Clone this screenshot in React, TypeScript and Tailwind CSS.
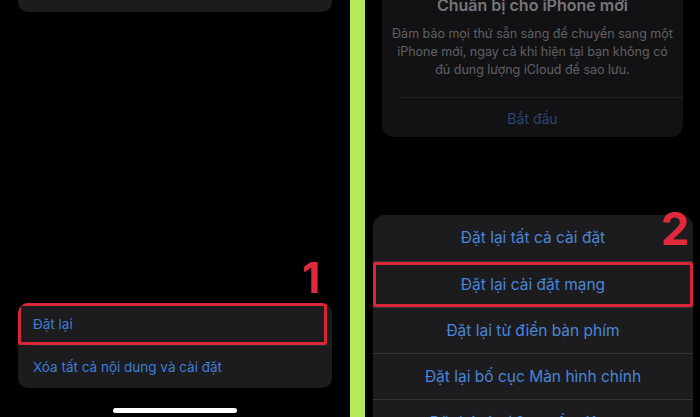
import React from 'react';

const FONT = { fontFamily: 'Inter, "Liberation Sans", "Noto Sans", sans-serif' };

// Hàng trong menu đặt lại (bên phải)
const sheetRows = [
  'Đặt lại tất cả cài đặt',
  'Đặt lại cài đặt mạng',
  'Đặt lại từ điển bàn phím',
  'Đặt lại bố cục Màn hình chính',
  'Đặt lại vị trí & quyền riêng tư',
];

function LeftPhone() {
  return (
    <div className="relative flex h-full w-[350px] shrink-0 flex-col bg-black">
      <div className="mx-[18px] h-[12px] rounded-b-[10px] bg-[#1c1c1e]" />

      <div className="absolute left-[302px] top-[257px] text-[42px] font-bold leading-none text-[#e02a3c]">
        1
      </div>

      <div className="mx-[18px] mt-[291px] flex flex-col overflow-hidden rounded-[10px] bg-[#1c1c1e]">
        <div className="relative flex h-[42px] items-center pl-[15px]">
          <span className="text-[13.5px] text-[#3f7fd6]">Đặt lại</span>
          <div className="absolute inset-y-0 left-0 right-[5px] rounded-[2px] border-[3px] border-[#d9253a]" />
        </div>
        <div className="ml-[15px] h-px bg-[#2a2a2c]" />
        <div className="flex h-[42px] items-center pl-[15px]">
          <span className="text-[13.5px] text-[#3f7fd6]">Xóa tất cả nội dung và cài đặt</span>
        </div>
      </div>

      <div className="mx-auto mt-[20px] h-[5px] w-[124px] rounded-full bg-white" />
    </div>
  );
}

function RightPhone() {
  return (
    <div className="relative flex h-full w-[335px] shrink-0 flex-col overflow-hidden bg-black">
      <div className="mx-[17px] flex h-[137px] w-[301px] shrink-0 flex-col items-center overflow-hidden rounded-b-[12px] bg-[#121214] px-[10px]">
        <div className="-mt-[6px] whitespace-nowrap text-[16px] font-semibold leading-[22px] text-[#76767b]">
          Chuẩn bị cho iPhone mới
        </div>
        <p className="mt-[9px] whitespace-nowrap text-center text-[12.5px] leading-[18px] text-[#606064]">
          Đảm bảo mọi thứ sẵn sàng để chuyển sang một
          <br />
          iPhone mới, ngay cả khi hiện tại bạn không có
          <br />
          đủ dung lượng iCloud để sao lưu.
        </p>
        <div className="-mr-[10px] ml-[8px] mt-[18px] h-px shrink-0 self-stretch bg-[#202022]" />
        <div className="flex h-[40px] shrink-0 items-center text-[14px] text-[#2a4775]">Bắt đầu</div>
      </div>

      <div className="ml-[8px] mt-[78px] flex w-[320px] flex-col overflow-hidden rounded-t-[12px] bg-[#1c1c1e]">
        {sheetRows.map((label, i) => (
          <div
            key={label}
            className={`relative flex h-[46px] shrink-0 items-center justify-center ${
              i > 0 ? 'border-t border-[#353537]' : ''
            }`}
          >
            <span className="whitespace-nowrap text-[15.5px] text-[#4a86d8]">{label}</span>
            {i === 1 && (
              <div className="absolute inset-0 rounded-[2px] border-[3px] border-[#d9253a]" />
            )}
          </div>
        ))}
      </div>

      <div className="absolute right-[11px] top-[206px] text-[45px] font-bold leading-none text-[#e02a3c]">
        2
      </div>
    </div>
  );
}

export default function App() {
  return (
    <div className="flex h-[417px] w-[700px] overflow-hidden bg-black" style={FONT}>
      <LeftPhone />
      <div className="h-full w-[15px] shrink-0 bg-[#b6e85a]" />
      <RightPhone />
    </div>
  );
}
